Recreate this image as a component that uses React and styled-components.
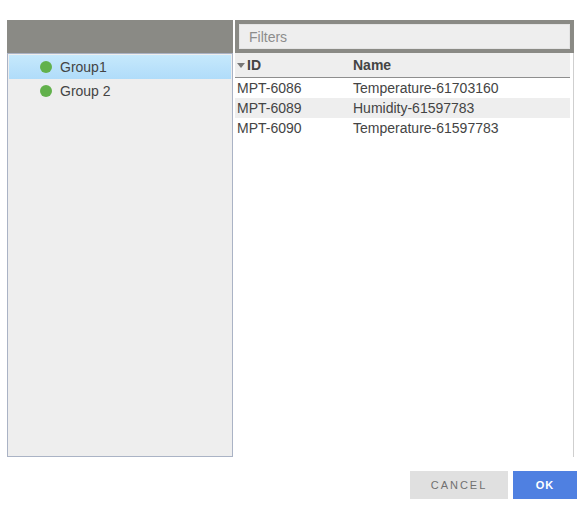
import React from 'react';
import styled, { createGlobalStyle } from 'styled-components';

const GlobalStyle = createGlobalStyle`
    body {
        margin: 0;
        background: #fff;
        font-family: Arial, "Liberation Sans", sans-serif;
    }
`;

const Dialog = styled.div`
    width: 586px;
    height: 511px;
    box-sizing: border-box;
    padding: 20px 12px 0 7px;
    display: flex;
    flex-direction: column;
`;

const Panels = styled.div`
    display: flex;
    gap: 2px;
    height: 437px;
`;

const GroupPane = styled.div`
    width: 226px;
    display: flex;
    flex-direction: column;
`;

const PaneHeader = styled.div`
    height: 33px;
    background: #8a8a85;
    flex-shrink: 0;
`;

const GroupList = styled.div`
    flex: 1;
    background: #eeeeee;
    border: 1px solid #aab3c5;
    padding: 1px;
`;

const GroupRow = styled.div`
    height: 24px;
    display: flex;
    align-items: center;
    padding-left: 31px;
    gap: 8px;
    font-size: 14px;
    color: #444;
    background: ${p => (p.$selected ? 'linear-gradient(#c6e9fc, #b0dcfa)' : 'transparent')};
`;

const Dot = styled.span`
    width: 12px;
    height: 12px;
    border-radius: 50%;
    background: #62b14c;
`;

const TablePane = styled.div`
    width: 339px;
    display: flex;
    flex-direction: column;
`;

const FilterBar = styled.div`
    height: 33px;
    box-sizing: border-box;
    padding: 4px;
    background: #8a8a85;
    flex-shrink: 0;
`;

const FilterInput = styled.input`
    width: 100%;
    height: 25px;
    box-sizing: border-box;
    border: 1px solid #e4e4e4;
    background: #eeeeee;
    padding: 0 9px;
    font-family: Arial, "Liberation Sans", sans-serif;
    font-size: 14px;
    color: #444;
    outline: none;

    &::placeholder {
        color: #8c8c8c;
    }
`;

const TableBody = styled.div`
    flex: 1;
    border-right: 1px solid #cfcfcf;
    padding-right: 3px;
`;

const HeaderRow = styled.div`
    display: grid;
    grid-template-columns: 116px 1fr;
    height: 24px;
    align-items: center;
    background: #eeeeee;
    border-bottom: 1px solid #8e8e8e;
    font-size: 14px;
    font-weight: bold;
    color: #444;
`;

const HeaderCell = styled.div`
    display: flex;
    align-items: center;
    padding-left: 2px;
`;

const Caret = styled.span`
    width: 0;
    height: 0;
    border-left: 4px solid transparent;
    border-right: 4px solid transparent;
    border-top: 5px solid #777;
    margin-right: 2px;
    margin-top: 1px;
`;

const Row = styled.div`
    display: grid;
    grid-template-columns: 116px 1fr;
    height: 20px;
    align-items: center;
    background: ${p => (p.$alt ? '#eeeeee' : '#fff')};
    font-size: 14px;
    color: #444;
`;

const Cell = styled.div`
    padding-left: 2px;
    white-space: nowrap;
`;

const Footer = styled.div`
    display: flex;
    justify-content: flex-end;
    gap: 5px;
    padding-top: 14px;
    margin-right: -3px;
`;

const Button = styled.button`
    height: 28px;
    width: ${p => (p.$primary ? '64px' : '98px')};
    border: none;
    border-radius: 0;
    background: ${p => (p.$primary ? '#4f80e1' : '#e0e0e0')};
    color: ${p => (p.$primary ? '#fff' : '#707070')};
    font-family: Arial, "Liberation Sans", sans-serif;
    font-size: 11px;
    font-weight: ${p => (p.$primary ? 'bold' : 'normal')};
    letter-spacing: ${p => (p.$primary ? '1px' : '2px')};
    padding: 0;
`;

const groups = [
    { name: 'Group1', selected: true },
    { name: 'Group 2', selected: false },
];

const sensors = [
    { id: 'MPT-6086', name: 'Temperature-61703160' },
    { id: 'MPT-6089', name: 'Humidity-61597783' },
    { id: 'MPT-6090', name: 'Temperature-61597783' },
];

const App = () => (
    <>
        <GlobalStyle />
        <Dialog>
            <Panels>
                <GroupPane>
                    <PaneHeader />
                    <GroupList>
                        {groups.map(g => (
                            <GroupRow key={g.name} $selected={g.selected}>
                                <Dot />
                                {g.name}
                            </GroupRow>
                        ))}
                    </GroupList>
                </GroupPane>
                <TablePane>
                    <FilterBar>
                        <FilterInput placeholder="Filters" />
                    </FilterBar>
                    <TableBody>
                        <HeaderRow>
                            <HeaderCell>
                                <Caret />
                                ID
                            </HeaderCell>
                            <HeaderCell>Name</HeaderCell>
                        </HeaderRow>
                        {sensors.map((s, i) => (
                            <Row key={s.id} $alt={i % 2 === 1}>
                                <Cell>{s.id}</Cell>
                                <Cell>{s.name}</Cell>
                            </Row>
                        ))}
                    </TableBody>
                </TablePane>
            </Panels>
            <Footer>
                <Button>CANCEL</Button>
                <Button $primary>OK</Button>
            </Footer>
        </Dialog>
    </>
);

export default App;
